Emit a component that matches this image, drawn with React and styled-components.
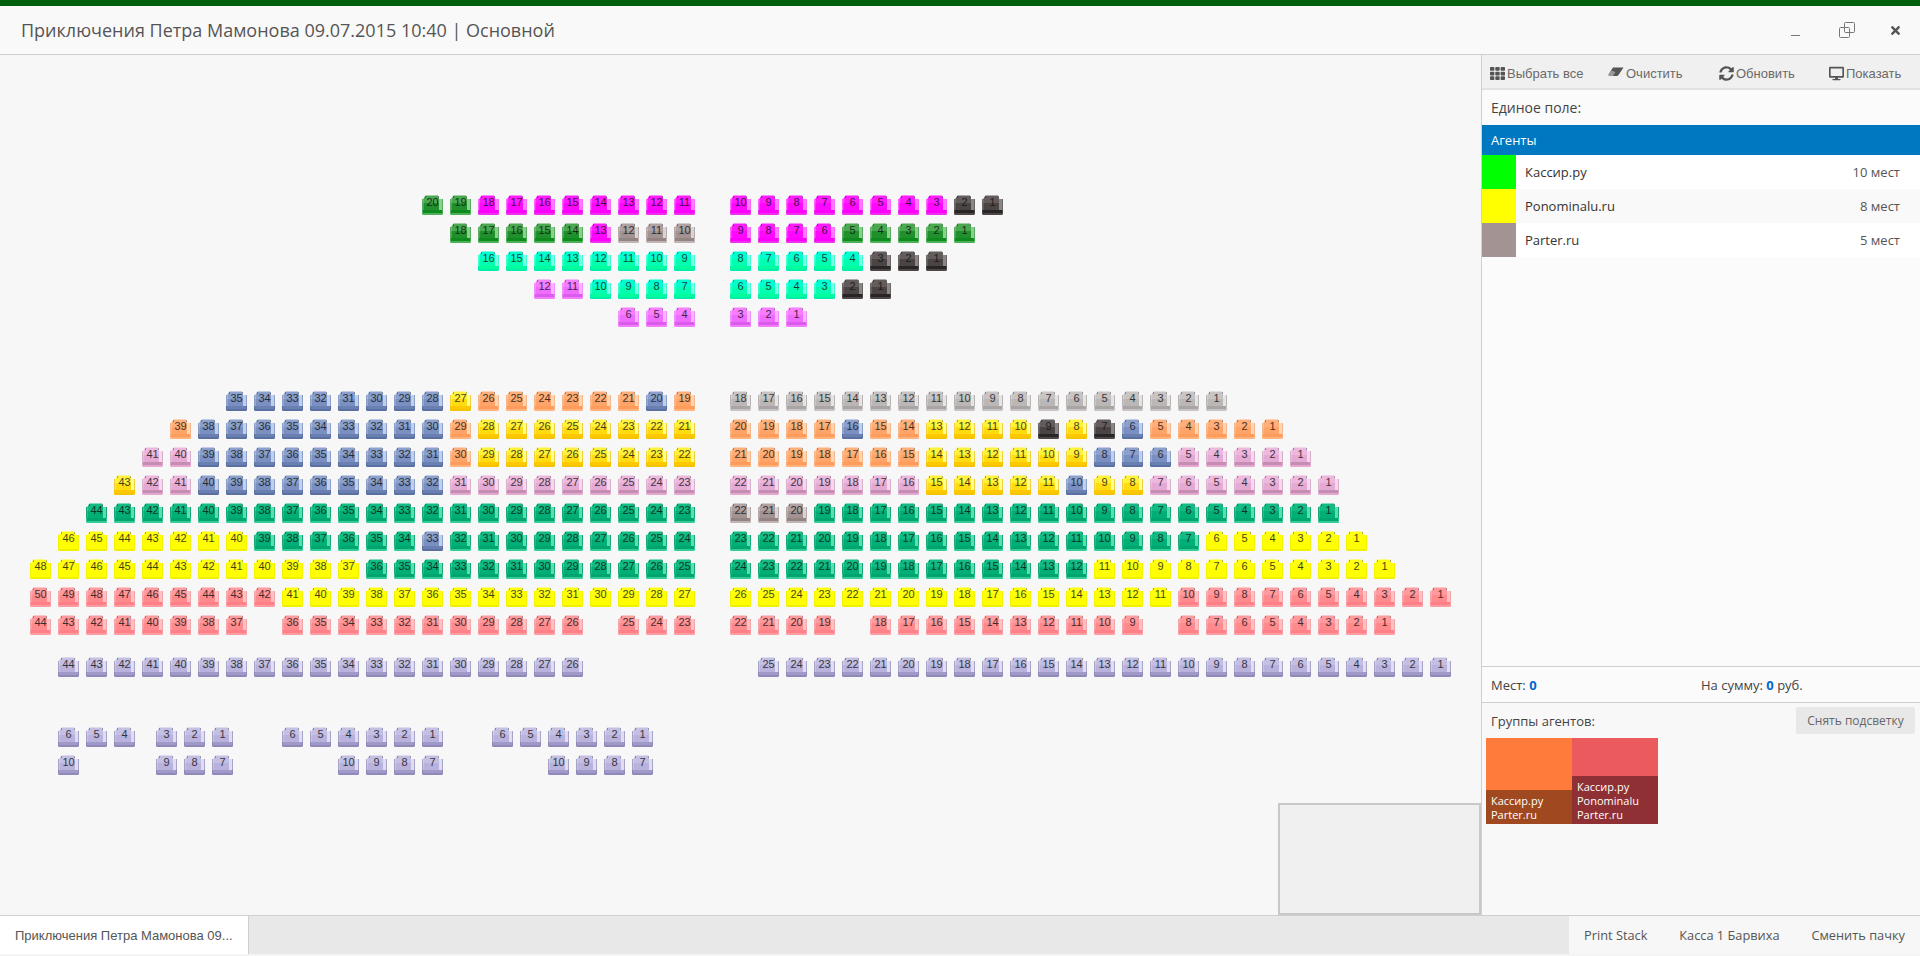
import React from "react";
import styled, { createGlobalStyle } from "styled-components";
import { FaTh, FaSyncAlt, FaDesktop, FaTimes } from "react-icons/fa";

const GlobalStyle = createGlobalStyle`
  html, body {
    margin: 0;
    padding: 0;
    background: #f7f7f7;
    font-family: "Open Sans", "Liberation Sans", sans-serif;
    overflow: hidden;
  }
  * { box-sizing: border-box; }
`;

// top = upper back, low = lower back, arm = side panels, base = seat, edge = lip, line = outline
const palette = {
  G: { top: "#4aa850", low: "#20902c", arm: "#8ad08e", base: "#0f8a1e", edge: "#4cb056", line: "#5cab62" },
  M: { top: "#ff1cff", low: "#ff08ff", arm: "#ff7cff", base: "#ff00ff", edge: "#ee30ee", line: "#ff66ff" },
  P: { top: "#b0a2a2", low: "#a29292", arm: "#dad3d3", base: "#948383", edge: "#c0b4b4", line: "#b5aaaa" },
  C: { top: "#00ffd0", low: "#00ffb0", arm: "#7fffe4", base: "#00ff9c", edge: "#00eeaa", line: "#40ffd0" },
  V: { top: "#f67eff", low: "#f06cff", arm: "#ffb4ff", base: "#da5cec", edge: "#f47cff", line: "#f090ff" },
  D: { top: "#625c5c", low: "#4a4444", arm: "#8c8787", base: "#2a2525", edge: "#4c4646", line: "#6c6666" },
  B: { top: "#8ba0cc", low: "#7a90c2", arm: "#c0cfeb", base: "#6a80b0", edge: "#5a70a2", line: "#8ca0c8" },
  O: { top: "#ffb07a", low: "#ffa468", arm: "#ffd4b0", base: "#ff9c5c", edge: "#ffb27c", line: "#f5b88c" },
  T: { top: "#fff23c", low: "#ffdc10", arm: "#ffff90", base: "#ffc800", edge: "#f5c400", line: "#f0d040" },
  K: { top: "#ecb8de", low: "#e4aad4", arm: "#f6d8ee", base: "#c48eb2", edge: "#e4a8d0", line: "#d8b0cc" },
  E: { top: "#12ba84", low: "#00ae76", arm: "#5ae0ae", base: "#00a46e", edge: "#32cc94", line: "#18a878" },
  Y: { top: "#ffff10", low: "#ffff00", arm: "#ffff00", base: "#ffff00", edge: "#f0f000", line: "#f4f400" },
  R: { top: "#ff9a9e", low: "#ff8a8e", arm: "#ffc0c4", base: "#ff8088", edge: "#ff9ca2", line: "#f2a6aa" },
  L: { top: "#c4c0e4", low: "#b8b2dc", arm: "#e0ddf2", base: "#a09ac8", edge: "#8f89ba", line: "#a8a4c8" },
  A: { top: "#c8c4c4", low: "#bcb7b7", arm: "#e6e3e3", base: "#aaa5a5", edge: "#c8c4c4", line: "#b8b4b4" },
};

// [row in 14px tracks, first column in seat widths, first number, colour runs]
const blocks = [
  [0, 14, 20, "G2 M8"], [0, 25, 10, "M8 D2"],
  [2, 15, 18, "G5 M1 P3"], [2, 25, 9, "M4 G5"],
  [4, 16, 16, "C8"], [4, 25, 8, "C5 D3"],
  [6, 18, 12, "V2 C4"], [6, 25, 6, "C4 D2"],
  [8, 21, 6, "V3"], [8, 25, 3, "V3"],
  [14, 7, 35, "B8 T1 O6 B1 O1"], [14, 25, 18, "A18"],
  [16, 5, 39, "O1 B9 O1 T8"], [16, 25, 20, "O4 B1 O2 T4 D1 T1 D1 B1 O5"],
  [18, 4, 41, "K2 B9 O1 T8"], [18, 25, 21, "O7 T6 B3 K5"],
  [20, 3, 43, "T1 K2 B9 K9"], [20, 25, 22, "K7 T5 B1 T2 K7"],
  [22, 2, 44, "E22"], [22, 25, 22, "P3 E19"],
  [24, 1, 46, "Y7 E6 B1 E9"], [24, 25, 23, "E17 Y6"],
  [26, 0, 48, "Y12 E12"], [26, 25, 24, "E13 Y11"],
  [28, 0, 50, "R9 Y15"], [28, 25, 26, "Y16 R10"],
  [30, 0, 44, "R8"], [30, 9, 36, "R11"], [30, 21, 25, "R3"],
  [30, 25, 22, "R4"], [30, 30, 18, "R10"], [30, 41, 8, "R8"],
  [33, 1, 44, "L19"], [33, 26, 25, "L25"],
  [38, 1, 6, "L3"], [38, 4.5, 3, "L3"], [38, 9, 6, "L6"], [38, 16.5, 6, "L6"],
  [40, 1, 10, "L1"], [40, 4.5, 9, "L3"], [40, 11, 10, "L4"], [40, 18.5, 10, "L4"],
];

const seats = blocks.flatMap(([row, col, first, runs]) => {
  const list = [];
  let n = 0;
  runs.split(" ").forEach((run) => {
    const count = Number(run.slice(1));
    for (let i = 0; i < count; i++) {
      list.push({ row, col: col + n, num: first - n, color: run[0] });
      n++;
    }
  });
  return list;
});

const agents = [
  { name: "Кассир.ру", color: "#00ff00", count: "10 мест" },
  { name: "Ponominalu.ru", color: "#ffff00", count: "8 мест" },
  { name: "Parter.ru", color: "#a39393", count: "5 мест" },
];

const Page = styled.div`
  width: 1920px;
  height: 956px;
  display: flex;
  flex-direction: column;
  background: #f7f7f7;
  color: #444;
`;

const TopStripe = styled.div`
  height: 6px;
  background: #00600c;
`;

const TitleBar = styled.header`
  height: 49px;
  display: flex;
  align-items: center;
  justify-content: space-between;
  padding: 0 19px 0 21px;
  background: #f9f9f9;
  border-bottom: 1px solid #cfcfcf;
`;

const Title = styled.h1`
  margin: 0;
  font-size: 18px;
  font-weight: 400;
  color: #555;
`;

const WindowButtons = styled.div`
  display: flex;
  align-items: center;
  color: #666;
  gap: 32px;
`;

const MinimizeMark = styled.span`
  width: 9px;
  height: 1px;
  margin: 11px 7px 0 0;
  background: #777;
`;

const CloseIcon = styled(FaTimes)`
  width: 11px;
  height: 13px;
  margin-left: 3px;
  color: #555;
`;

const Main = styled.main`
  flex: 1;
  min-height: 0;
  display: flex;
`;

const Hall = styled.section`
  position: relative;
  flex: 1;
  min-width: 0;
  padding: 140px 0 0 29px;
  background: #f7f7f7;
`;

const SeatGrid = styled.div`
  display: grid;
  grid-template-columns: repeat(102, 14px);
  grid-auto-rows: 14px;
`;

const Seat = styled.div`
  position: relative;
  width: 23px;
  height: 20px;
  text-align: center;
  font-family: "Liberation Sans", sans-serif;
  font-size: 11px;
  line-height: 14px;
  color: #111;
`;

const SeatArt = styled.svg`
  position: absolute;
  left: 0;
  top: 0;
`;

const SeatNumber = styled.span`
  position: relative;
  opacity: 0.8;
`;

const MiniMap = styled.div`
  position: absolute;
  right: 0;
  bottom: 0;
  width: 203px;
  height: 112px;
  background: #f0f0f0;
  border: 2px solid #c8c8c8;
`;

const Side = styled.aside`
  width: 439px;
  flex-shrink: 0;
  display: flex;
  flex-direction: column;
  background: #fbfbfb;
  border-left: 1px solid #cfcfcf;
`;

const Toolbar = styled.div`
  height: 35px;
  display: grid;
  grid-template-columns: 118px 111px 110px 1fr;
  padding: 3px 0 0 8px;
  background: #f0f0f0;
  border-bottom: 2px solid #e2e2e2;
`;

const ToolButton = styled.div`
  display: flex;
  align-items: center;
  gap: 2px;
  font-family: "Liberation Sans", sans-serif;
  font-size: 13px;
  color: #6a6a6a;
  svg { color: #555; font-size: 15px; }
`;

const FieldLabel = styled.div`
  height: 35px;
  padding: 8px 0 0 9px;
  font-size: 14px;
  color: #444;
`;

const AgentsHead = styled.div`
  height: 30px;
  padding-left: 9px;
  display: flex;
  align-items: center;
  background: #0078c1;
  color: #fff;
  font-size: 13px;
`;

const AgentRow = styled.div`
  height: 34px;
  display: flex;
  align-items: center;
  padding-right: 20px;
  font-size: 13px;
  color: #333;
  background: #fff;
  &:nth-child(even) { background: #f9f9f9; }
`;

const Swatch = styled.span`
  width: 34px;
  height: 34px;
  margin-right: 9px;
  background: ${(p) => p.$color};
`;

const AgentName = styled.span`
  flex: 1;
`;

const AgentCount = styled.span`
  color: #555;
`;

const Spacer = styled.div`
  flex: 1;
`;

const Summary = styled.div`
  height: 37px;
  display: grid;
  grid-template-columns: 210px 1fr;
  align-items: center;
  padding-left: 9px;
  font-size: 13px;
  color: #444;
  border-top: 1px solid #cfcfcf;
  border-bottom: 1px solid #cfcfcf;
  b { color: #0068d0; }
`;

const Groups = styled.div`
  height: 212px;
  padding: 4px 5px 0 4px;
  background: #f8f8f8;
`;

const GroupsHead = styled.div`
  height: 27px;
  display: flex;
  align-items: center;
  justify-content: space-between;
  padding-left: 5px;
  margin-bottom: 4px;
  font-size: 13px;
  color: #444;
`;

const ClearButton = styled.button`
  width: 119px;
  height: 27px;
  padding: 0;
  border: 0;
  border-radius: 2px;
  background: #e8e8e8;
  font-family: "Open Sans", sans-serif;
  font-size: 12px;
  color: #666;
`;

const Tiles = styled.div`
  display: flex;
`;

const Tile = styled.div`
  width: 86px;
  height: 86px;
  display: flex;
  align-items: flex-end;
  background: ${(p) => p.$color};
`;

const TileCaption = styled.div`
  width: 100%;
  padding: 4px 5px 2px;
  font-size: 11px;
  line-height: 14px;
  color: #fff;
  background: ${(p) => p.$color};
`;

const BottomBar = styled.footer`
  height: 39px;
  display: flex;
  background: #e8e8e8;
  border-top: 1px solid #cfcfcf;
`;

const WindowTab = styled.div`
  width: 249px;
  padding-left: 15px;
  display: flex;
  align-items: center;
  background: #fff;
  border-right: 1px solid #cfcfcf;
  font-family: "Liberation Sans", sans-serif;
  font-size: 13px;
  color: #555;
`;

const StatusItems = styled.div`
  margin-left: auto;
  width: 351px;
  padding: 0 15px;
  display: flex;
  align-items: center;
  justify-content: space-between;
  background: #f7f7f7;
  font-size: 12.8px;
  color: #555;
`;

const BottomGap = styled.div`
  height: 2px;
  background: #f4f4f4;
`;

const SeatIcon = ({ color }) => {
  const c = palette[color];
  return (
    <SeatArt width="23" height="20" viewBox="0 0 23 20">
      <rect x="1" y="4" width="21" height="12" fill={c.arm} />
      <rect x="1" y="4" width="1" height="12" fill={c.line} />
      <rect x="21" y="4" width="1" height="12" fill={c.line} />
      <path d="M2.5 3.5 L4.5 0.5 H17 L18 3 V15 H2.5 Z" fill={c.top} />
      <rect x="2.5" y="8" width="15.5" height="7" fill={c.low} />
      <rect x="4" y="1" width="1" height="2" fill="#000" opacity="0.3" />
      <rect x="17" y="1" width="1" height="2" fill="#000" opacity="0.3" />
      <path d="M1 15 H22 V18.5 Q22 20 20.5 20 H2.5 Q1 20 1 18.5 Z" fill={c.edge} />
      <rect x="2" y="15" width="19" height="3" fill={c.base} />
    </SeatArt>
  );
};

const RestoreIcon = () => (
  <svg width="16" height="16" viewBox="0 0 16 16" fill="none" stroke="#777" strokeWidth="1">
    <rect x="5.5" y="0.5" width="10" height="10" rx="1" />
    <rect x="0.5" y="5.5" width="10" height="10" rx="1" />
  </svg>
);

const EraserIcon = () => (
  <svg width="16" height="12" viewBox="0 0 16 12">
    <path d="M5 0.5 H15.5 L10.5 8 Q9.8 9 8.5 9 H2 Q0 9 0.8 7 Z" fill="#555" />
    <path d="M0.8 7 L3 3.5 L7.5 5 L5 9 H2 Q0 9 0.8 7 Z" fill="#999" />
  </svg>
);

const App = () => (
  <Page>
    <GlobalStyle />
    <TopStripe />
    <TitleBar>
      <Title>Приключения Петра Мамонова 09.07.2015 10:40 | Основной</Title>
      <WindowButtons>
        <MinimizeMark />
        <RestoreIcon />
        <CloseIcon />
      </WindowButtons>
    </TitleBar>
    <Main>
      <Hall>
        <SeatGrid>
          {seats.map((s) => (
            <Seat
              key={`${s.row}-${s.col}`}
              style={{
                gridColumn: `${s.col * 2 + 1} / span 2`,
                gridRow: `${s.row + 1} / span 2`,
              }}
            >
              <SeatIcon color={s.color} />
              <SeatNumber>{s.num}</SeatNumber>
            </Seat>
          ))}
        </SeatGrid>
        <MiniMap />
      </Hall>
      <Side>
        <Toolbar>
          <ToolButton><FaTh />Выбрать все</ToolButton>
          <ToolButton><EraserIcon />Очистить</ToolButton>
          <ToolButton><FaSyncAlt />Обновить</ToolButton>
          <ToolButton><FaDesktop />Показать</ToolButton>
        </Toolbar>
        <FieldLabel>Единое поле:</FieldLabel>
        <AgentsHead>Агенты</AgentsHead>
        <div>
          {agents.map((a) => (
            <AgentRow key={a.name}>
              <Swatch $color={a.color} />
              <AgentName>{a.name}</AgentName>
              <AgentCount>{a.count}</AgentCount>
            </AgentRow>
          ))}
        </div>
        <Spacer />
        <Summary>
          <span>Мест: <b>0</b></span>
          <span>На сумму: <b>0</b> руб.</span>
        </Summary>
        <Groups>
          <GroupsHead>
            Группы агентов:
            <ClearButton>Снять подсветку</ClearButton>
          </GroupsHead>
          <Tiles>
            <Tile $color="#ff7b3c">
              <TileCaption $color="#a0481f">Кассир.ру<br />Parter.ru</TileCaption>
            </Tile>
            <Tile $color="#eb5a5c">
              <TileCaption $color="#8e3034">Кассир.ру<br />Ponominalu<br />Parter.ru</TileCaption>
            </Tile>
          </Tiles>
        </Groups>
      </Side>
    </Main>
    <BottomBar>
      <WindowTab>Приключения Петра Мамонова 09...</WindowTab>
      <StatusItems>
        <span>Print Stack</span>
        <span>Касса 1 Барвиха</span>
        <span>Сменить пачку</span>
      </StatusItems>
    </BottomBar>
    <BottomGap />
  </Page>
);

export default App;
